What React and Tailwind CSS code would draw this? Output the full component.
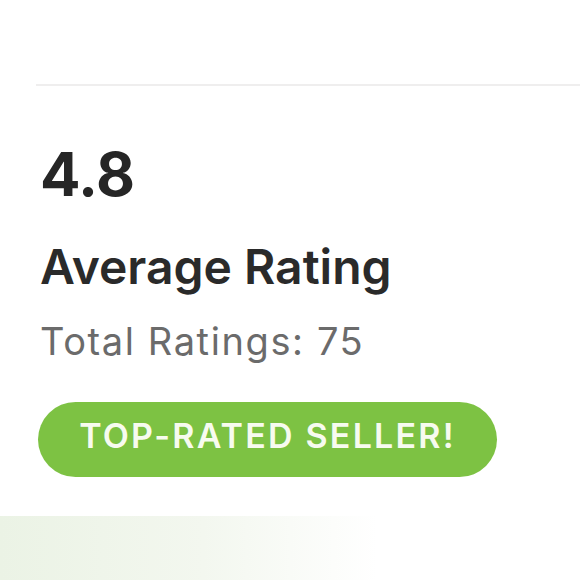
export default function App() {
  return (
    <div className="w-[580px] h-[580px] bg-white overflow-hidden flex flex-col" style={{ fontFamily: 'Inter, "Liberation Sans", sans-serif' }}>
      <div className="h-[84px] shrink-0" />
      <div className="ml-[36px] h-[2px] bg-[#efeeee] shrink-0" />
      <div className="pl-[40px] flex flex-col items-start">
        <div className="mt-[58px] text-[60px] leading-none font-bold text-[#262626] tracking-[-0.5px]">4.8</div>
        <div className="mt-[39px] text-[48px] leading-none font-semibold text-[#2a2a2a]">Average Rating</div>
        <div className="mt-[31px] text-[38px] leading-none text-[#6b6b6b] tracking-[1.6px]">Total Ratings: 75</div>
        <div className="mt-[42px] -ml-[2px] w-[459px] h-[75px] pb-[8px] rounded-full bg-[#7dc243] flex items-center justify-center text-[34px] leading-none font-semibold text-[#f7fbef] tracking-[2.2px]">
          TOP-RATED SELLER!
        </div>
      </div>
      <div className="mt-auto h-[64px] shrink-0 bg-gradient-to-r from-[#ebf3e5] via-[#f3f7ef] via-35% to-white to-65%" />
    </div>
  );
}
